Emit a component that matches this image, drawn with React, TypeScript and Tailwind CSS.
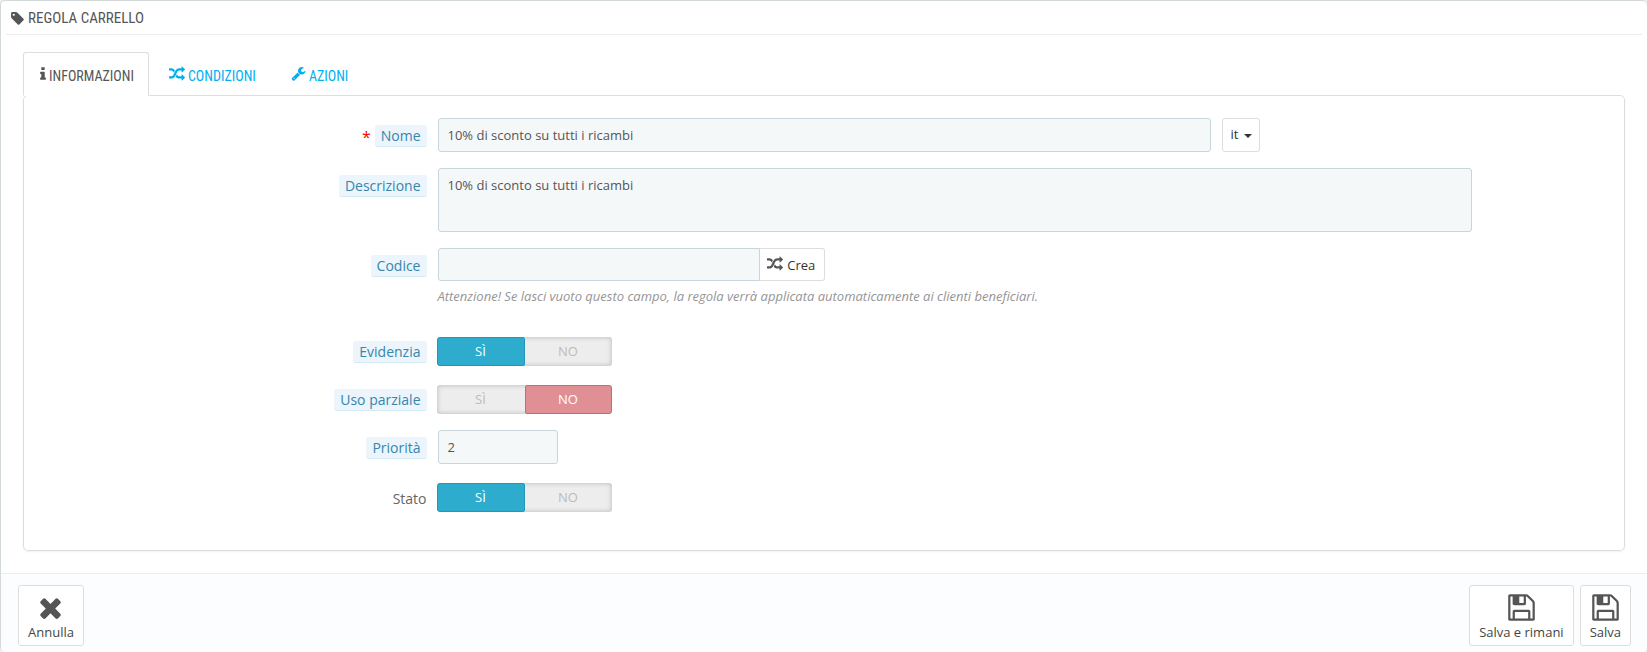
import { useState } from 'react';
import type { ReactNode } from 'react';
import clsx from 'clsx';

const icons = {
    tag: 'M576 448q0-53-37.5-90.5t-90.5-37.5-90.5 37.5-37.5 90.5 37.5 90.5 90.5 37.5 90.5-37.5 37.5-90.5zm1067 576q0 53-37 90l-491 492q-39 37-91 37-53 0-90-37l-715-716q-38-37-64.5-101t-26.5-117v-416q0-52 38-90t90-38h416q53 0 117 26.5t102 64.5l715 714q37 39 37 91z',
    info: 'M1216 1344v128q0 26-19 45t-45 19h-512q-26 0-45-19t-19-45v-128q0-26 19-45t45-19h64v-384h-64q-26 0-45-19t-19-45v-128q0-26 19-45t45-19h384q26 0 45 19t19 45v576h64q26 0 45 19t19 45zm-128-1152v192q0 26-19 45t-45 19h-256q-26 0-45-19t-19-45v-192q0-26 19-45t45-19h256q26 0 45 19t19 45z',
    random: 'M666 481q-60 92-137 273-22-45-37-72.5t-40.5-63.5-51-56.5-63-35-81.5-14.5h-224q-14 0-23-9t-9-23v-192q0-14 9-23t23-9h224q250 0 410 225zm1126 799q0 14-9 23l-320 320q-9 9-23 9-13 0-22.5-9.5t-9.5-22.5v-192q-32 0-85 .5t-81 1-73-1-71-5-64-10.5-63-18.5-58-28.5-59-40-55-53.5-56-69.5q59-93 136-273 22 45 37 72.5t40.5 63.5 51 56.5 63 35 81.5 14.5h256v-192q0-14 9-23t23-9q12 0 24 10l319 319q9 9 9 23zm0-896q0 14-9 23l-320 320q-9 9-23 9-13 0-22.5-9.5t-9.5-22.5v-192h-256q-48 0-87 15t-69 45-51 61.5-45 77.5q-32 62-78 171-29 66-49.5 111t-54 105-64 100-74 83-90 68.5-106.5 42-128 16.5h-224q-14 0-23-9t-9-23v-192q0-14 9-23t23-9h224q48 0 87-15t69-45 51-61.5 45-77.5q32-62 78-171 29-66 49.5-111t54-105 64-100 74-83 90-68.5 106.5-42 128-16.5h256v-192q0-14 9-23t23-9q12 0 24 10l319 319q9 9 9 23z',
    wrench: 'M448 1472q0-26-19-45t-45-19-45 19-19 45 19 45 45 19 45-19 19-45zm644-420l-682 682q-37 37-90 37-52 0-91-37l-106-108q-38-36-38-90 0-53 38-91l681-681q39 98 114.5 173.5t173.5 114.5zm634-435q0 39-23 106-47 134-164.5 217.5t-258.5 83.5q-185 0-316.5-131.5t-131.5-316.5 131.5-316.5 316.5-131.5q58 0 121.5 16.5t107.5 46.5q16 11 16 28t-16 28l-293 169v224l193 107q5-3 79-48.5t135.5-81 70.5-35.5q15 0 23.5 10t8.5 25z',
    times: 'M1490 1322q0 40-28 68l-136 136q-28 28-68 28t-68-28l-294-294-294 294q-28 28-68 28t-68-28l-136-136q-28-28-28-68t28-68l294-294-294-294q-28-28-28-68t28-68l136-136q28-28 68-28t68 28l294 294 294-294q28-28 68-28t68 28l136 136q28 28 28 68t-28 68l-294 294 294 294q28 28 28 68z',
    save: 'M512 1536h768v-384h-768v384zm896 0h128v-896q0-14-10-38.5t-20-34.5l-281-281q-10-10-34-20t-39-10v416q0 40-28 68t-68 28h-576q-40 0-68-28t-28-68v-416h-128v1280h128v-416q0-40 28-68t68-28h832q40 0 68 28t28 68v416zm-384-928v-320q0-13-9.5-22.5t-22.5-9.5h-192q-13 0-22.5 9.5t-9.5 22.5v320q0 13 9.5 22.5t22.5 9.5h192q13 0 22.5-9.5t9.5-22.5zm640 32v928q0 40-28 68t-68 28h-1344q-40 0-68-28t-28-68v-1344q0-40 28-68t68-28h928q40 0 88 20t76 48l280 280q28 28 48 76t20 88z',
};

type IconName = keyof typeof icons;

const Icon = ({ name, className, viewBox = '0 0 1792 1792' }: { name: IconName; className: string; viewBox?: string }) => (
    <svg viewBox={viewBox} fill="currentColor" className={clsx('shrink-0', className)} aria-hidden="true">
        <path d={icons[name]} />
    </svg>
);

const tabs: { id: string; label: string; icon: IconName; viewBox?: string; iconClass: string }[] = [
    { id: 'info', label: 'INFORMAZIONI', icon: 'info', viewBox: '576 0 640 1792', iconClass: 'h-4 w-[6px]' },
    { id: 'conditions', label: 'CONDIZIONI', icon: 'random', iconClass: 'size-4' },
    { id: 'actions', label: 'AZIONI', icon: 'wrench', iconClass: 'size-[15px]' },
];

const fieldClass = 'block w-full rounded-[3px] border border-[#c7d6db] bg-[#f5f8f9] px-[9px] text-[13px] text-[#555] outline-none';

interface RowProps {
    label: string;
    htmlFor?: string;
    required?: boolean;
    plain?: boolean;
    children: ReactNode;
}

const Row = ({ label, htmlFor, required, plain, children }: RowProps) => (
    <div className="grid grid-cols-12">
        <div className="col-span-3 flex items-start justify-end px-[6px] pt-[7px] text-sm leading-5">
            {required && <span className="mr-1 text-base text-[#f00]">*</span>}
            <label
                id={`${htmlFor}-label`}
                htmlFor={htmlFor}
                className={clsx(
                    plain ? 'pt-[2px] text-[#666]' : 'rounded-[3px] border-b border-[#d3eaf5] bg-[#ebf5fb] px-[6px] pt-px text-[#3586ae]'
                )}
            >
                {label}
            </label>
        </div>
        <div className="col-span-8 px-[5px]">{children}</div>
    </div>
);

const Switch = ({ name, initial }: { name: string; initial: boolean }) => {
    const [on, setOn] = useState(initial);
    const base = 'flex h-full cursor-pointer items-center justify-center border';

    return (
        <div className="pt-[3px]">
            <div
                role="radiogroup"
                aria-labelledby={`${name}-label`}
                className="-ml-px flex h-[29px] w-[175px] rounded-[3px] bg-[#ededed] text-[13px] shadow-[inset_0_0_4px_1px_rgba(0,0,0,0.17)]"
            >
                <label className={clsx(base, 'w-22 rounded-l-[3px]', on ? 'rounded-r-[2px] border-[#2497b8] bg-[#2eacce] text-white' : 'border-transparent text-[#bbb]')}>
                    <input id={name} type="radio" name={name} checked={on} onChange={() => setOn(true)} className="sr-only" />
                    SÌ
                </label>
                <label className={clsx(base, 'flex-1 rounded-r-[3px]', on ? 'border-transparent text-[#bbb]' : 'rounded-l-[2px] border-[#ca6a6f] bg-[#e08f95] text-white')}>
                    <input type="radio" name={name} checked={!on} onChange={() => setOn(false)} className="sr-only" />
                    NO
                </label>
            </div>
        </div>
    );
};

const FooterButton = ({ icon, label }: { icon: IconName; label: string }) => (
    <button
        type="button"
        className="flex h-[61px] cursor-pointer flex-col items-center rounded-[3px] border border-[#ddd] bg-white px-[9px] pt-[6px] text-[13px] leading-[18px] text-[#444]"
    >
        <Icon name={icon} className="size-[31px] text-[#555]" />
        {label}
    </button>
);

const App = () => {
    const [tab, setTab] = useState('info');

    return (
        <div className="min-h-screen bg-[#eff1f2] font-['Open_Sans',sans-serif]">
            <form className="flex min-h-screen flex-col overflow-hidden rounded-[5px] border-t border-l border-[#d3d8db] bg-white">
                <h1 className="mx-[5px] flex h-[34px] items-center gap-[3px] border-b border-[#eee] pt-[2px] pl-1 font-['Ubuntu_Condensed','Roboto_Condensed',sans-serif] text-[15px] text-[#555]">
                    <Icon name="tag" className="size-[15px]" />
                    REGOLA CARRELLO
                </h1>

                <div className="px-[22px] pt-[17px] pb-[22px]">
                    {/* Tabs */}
                    <div role="tablist" className="flex gap-[3px] font-['Ubuntu_Condensed','Roboto_Condensed',sans-serif] text-sm">
                        {tabs.map((t) => (
                            <button
                                key={t.id}
                                type="button"
                                role="tab"
                                aria-selected={tab === t.id}
                                onClick={() => setTab(t.id)}
                                className={clsx(
                                    'z-10 -mb-px flex h-11 cursor-pointer items-center gap-[3px] rounded-t-[3px] border pt-[3px] pr-[14px] pl-4',
                                    tab === t.id ? 'border-[#ddd] border-b-white bg-white text-[#555]' : 'border-transparent text-[#00aff0]'
                                )}
                            >
                                <Icon name={t.icon} viewBox={t.viewBox} className={clsx('-mt-1', t.iconClass)} />
                                {t.label}
                            </button>
                        ))}
                    </div>

                    {/* Fields */}
                    <div className="flex flex-col gap-4 rounded-[5px] border border-[#ddd] px-[17px] pt-[22px] pb-[38px] shadow-[0_1px_2px_rgba(0,0,0,0.06)]">
                        <Row label="Nome" htmlFor="name" required>
                            <div className="-mx-[5px] flex">
                                <div className="w-3/4 px-[5px]">
                                    <input id="name" type="text" defaultValue="10% di sconto su tutti i ricambi" className={clsx(fieldClass, 'h-[34px]')} />
                                </div>
                                <div className="relative ml-[6px]">
                                    <select
                                        aria-label="Lingua"
                                        className="block h-[34px] w-[38px] cursor-pointer appearance-none rounded-[3px] border border-[#ddd] bg-white pl-2 text-[13px] text-[#333] outline-none"
                                    >
                                        <option>it</option>
                                    </select>
                                    <svg viewBox="0 0 8 4" fill="#333" className="pointer-events-none absolute top-4 right-2 h-1 w-2" aria-hidden="true">
                                        <path d="M0 0h8L4 4z" />
                                    </svg>
                                </div>
                            </div>
                        </Row>

                        <Row label="Descrizione" htmlFor="description">
                            <textarea
                                id="description"
                                defaultValue="10% di sconto su tutti i ricambi"
                                className={clsx(fieldClass, 'h-16 resize-none py-[7px] leading-[18px]')}
                            />
                        </Row>

                        <Row label="Codice" htmlFor="code">
                            <div className="flex w-3/8">
                                <input id="code" type="text" className={clsx(fieldClass, 'h-[33px] min-w-0 flex-1 rounded-r-none')} />
                                <button
                                    type="button"
                                    className="flex h-[33px] cursor-pointer items-center gap-1 rounded-r-[3px] border border-l-0 border-[#ddd] bg-white pt-[2px] pr-[9px] pl-[7px] text-[13px] text-[#333]"
                                >
                                    <Icon name="random" className="-mt-1 size-4 text-[#555]" />
                                    Crea
                                </button>
                            </div>
                            <p className="pt-[6px] pb-[13px] text-[13px] leading-[18px] text-[#959595] italic">
                                Attenzione! Se lasci vuoto questo campo, la regola verrà applicata automaticamente ai clienti beneficiari.
                            </p>
                        </Row>

                        <Row label="Evidenzia" htmlFor="highlight">
                            <Switch name="highlight" initial={true} />
                        </Row>

                        <Row label="Uso parziale" htmlFor="partial">
                            <Switch name="partial" initial={false} />
                        </Row>

                        <Row label="Priorità" htmlFor="priority">
                            <input id="priority" type="text" defaultValue="2" className={clsx(fieldClass, 'h-[34px] max-w-[120px]')} />
                        </Row>

                        <Row label="Stato" htmlFor="active" plain>
                            <Switch name="active" initial={true} />
                        </Row>
                    </div>
                </div>

                <div className="flex flex-1 items-start gap-[6px] border-t border-[#eee] bg-[#fcfdfe] pt-[11px] pr-4 pl-[17px]">
                    <FooterButton icon="times" label="Annulla" />
                    <div className="flex-1" />
                    <FooterButton icon="save" label="Salva e rimani" />
                    <FooterButton icon="save" label="Salva" />
                </div>
            </form>
        </div>
    );
};

export default App;
